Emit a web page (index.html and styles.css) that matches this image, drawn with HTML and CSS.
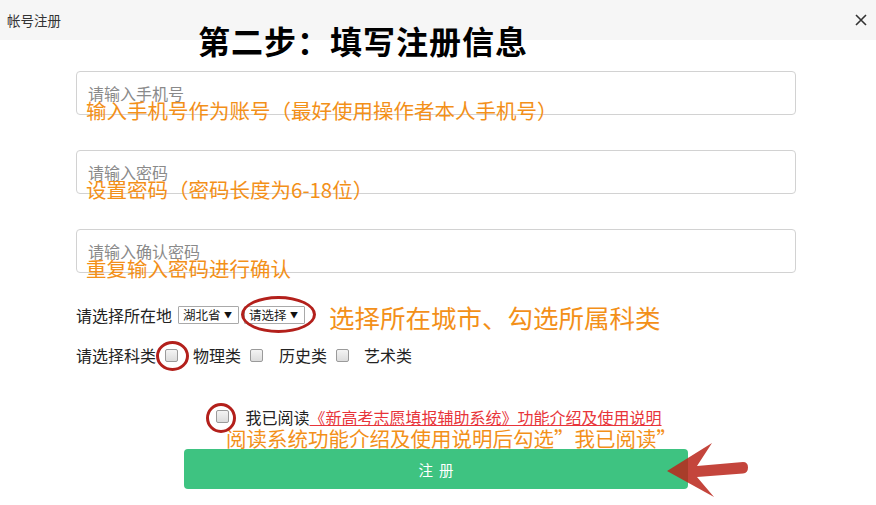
FILE: index.html
```html
<!DOCTYPE html>
<html lang="zh-CN">
<head>
<meta charset="utf-8">
<title>帐号注册</title>
<link rel="stylesheet" href="styles.css">
</head>
<body>
<div class="page">
  <header class="dialog-header">
    <span class="dialog-title">帐号注册</span>
    <svg class="close-icon" width="12" height="12" viewBox="0 0 12 12" aria-label="关闭">
      <path d="M1 1 L11 11 M11 1 L1 11" stroke="#333" stroke-width="1.6" fill="none"/>
    </svg>
  </header>

  <h1 class="step-title">第二步：填写注册信息</h1>

  <form class="form">
    <div class="field">
      <input class="text-input" type="text" placeholder="请输入手机号">
      <span class="note note-field">输入手机号作为账号（最好使用操作者本人手机号）</span>
    </div>
    <div class="field">
      <input class="text-input" type="password" placeholder="请输入密码">
      <span class="note note-field">设置密码（密码长度为6-18位）</span>
    </div>
    <div class="field">
      <input class="text-input" type="password" placeholder="请输入确认密码">
      <span class="note note-field">重复输入密码进行确认</span>
    </div>

    <div class="row row-city">
      <span class="label">请选择所在地</span>
      <span class="select select-province">湖北省<span class="caret">▼</span></span>
      <span class="marked">
        <span class="select select-city">请选择<span class="caret">▼</span></span>
        <span class="ring ring-select"></span>
      </span>
      <span class="note note-city">选择所在城市、勾选所属科类</span>
    </div>

    <div class="row row-subject">
      <span class="label">请选择科类</span>
      <span class="marked marked-first">
        <span class="checkbox"></span>
        <span class="ring ring-check"></span>
      </span>
      <span class="opt">物理类</span>
      <span class="checkbox"></span>
      <span class="opt opt-wide">历史类</span>
      <span class="checkbox"></span>
      <span class="opt opt-wide">艺术类</span>
    </div>

    <div class="row row-agree">
      <span class="marked">
        <span class="checkbox"></span>
        <span class="ring ring-agree"></span>
      </span>
      <span class="agree-text">我已阅读</span><a class="agree-link" href="#">《新高考志愿填报辅助系统》功能介绍及使用说明</a>
    </div>
    <div class="note note-agree">阅读系统功能介绍及使用说明后勾选”我已阅读”</div>

    <button class="submit" type="button">注 册</button>
  </form>

  <svg class="arrow" width="876" height="505" viewBox="0 0 876 505" aria-hidden="true">
    <path d="M667 471 L712 443 L697 466 L743 462 Q748 462 748 467.5 Q748 473 743 473.5 L697 477 L714 497 Z" fill="rgba(186,38,28,0.86)"/>
  </svg>
</div>
</body>
</html>
```

FILE: styles.css
```css
* { box-sizing: border-box; }

html, body {
  margin: 0;
  padding: 0;
  background: #fff;
}

body {
  font-family: "Noto Sans CJK SC", "Noto Sans", sans-serif;
  color: #222;
}

.page {
  position: relative;
  width: 876px;
  height: 505px;
  overflow: hidden;
}

.dialog-header {
  height: 40px;
  background: #f6f6f6;
  display: flex;
  align-items: center;
  justify-content: space-between;
  padding: 0 9px 0 7px;
}

.dialog-title {
  font-size: 13.5px;
  color: #333;
  line-height: 18px;
}

.close-icon { display: block; }

.step-title {
  position: absolute;
  left: 198px;
  top: 22px;
  margin: 0;
  font-size: 32px;
  line-height: 36px;
  font-weight: 700;
  letter-spacing: 1px;
  color: #000;
  white-space: nowrap;
}

.form {
  margin: 31px 80px 0 76px;
  display: flex;
  flex-direction: column;
}

.field {
  position: relative;
  height: 44px;
  margin-bottom: 35px;
}

.field:nth-of-type(3) { margin-bottom: 31px; }

.text-input {
  display: block;
  width: 100%;
  height: 44px;
  border: 1px solid #d2d2d2;
  border-radius: 4px;
  padding: 0 11px;
  font-family: inherit;
  font-size: 16px;
  color: #333;
  background: #fff;
  outline: none;
}

.text-input::placeholder { color: #8a8a8a; }

.note {
  color: #f39019;
  white-space: nowrap;
  font-family: "Noto Sans CJK SC", sans-serif;
}

.note-field {
  position: absolute;
  left: 10px;
  top: 27px;
  font-size: 20.5px;
  line-height: 24px;
}

.row {
  position: relative;
  display: flex;
  align-items: center;
  height: 22px;
  line-height: 20px;
  font-size: 16px;
}

.label { color: #222; white-space: nowrap; }

.select {
  display: inline-flex;
  align-items: center;
  height: 18px;
  border: 1px solid #a9a9a9;
  border-radius: 1px;
  padding: 0 6px 0 4px;
  font-size: 12.5px;
  line-height: 16px;
  color: #222;
  background: #fff;
  white-space: nowrap;
}

.select-province { margin-left: 6px; width: 61px; }
.select-city { width: 61px; }

.caret {
  font-size: 8px;
  margin-left: auto;
  color: #111;
}

.marked {
  position: relative;
  display: inline-flex;
  align-items: center;
}

.row-city .marked { margin-left: 5px; }

.ring {
  position: absolute;
  border: 3px solid #b3201b;
  border-radius: 50%;
  pointer-events: none;
}

.ring-select { left: -3px; top: -10px; width: 75px; height: 37px; }

.note-city {
  position: absolute;
  left: 253px;
  top: -2px;
  font-size: 25.5px;
  line-height: 30px;
}

.row-subject { margin-top: 18px; }

.checkbox {
  display: inline-block;
  width: 13px;
  height: 13px;
  border: 1px solid #9a9a9a;
  border-radius: 2px;
  background: linear-gradient(#f4f4f4, #dcdcdc);
  flex: none;
}

.marked-first { margin-left: 9px; }

.ring-check { left: -9px; top: -8px; width: 33px; height: 30px; }

.opt { margin: 0 9px 0 15px; }
.opt-wide { margin-left: 16px; }
.row-subject .opt:last-child { margin-left: 15px; }

.row-agree {
  margin-top: 40px;
  height: 21px;
  justify-content: center;
  padding-left: 6px;
}

.ring-agree { left: -10px; top: -7px; width: 30px; height: 30px; }

.agree-text { margin-left: 16px; color: #222; }

.agree-link {
  color: #e8343a;
  text-decoration: underline;
  white-space: nowrap;
}

.note-agree {
  margin-left: 150px;
  font-size: 20.5px;
  line-height: 22px;
  height: 22px;
}

.submit {
  align-self: center;
  width: 504px;
  height: 40px;
  border: none;
  border-radius: 4px;
  background: #3ec381;
  color: #fff;
  font-family: inherit;
  font-size: 14.5px;
  letter-spacing: 1.5px;
  padding: 0 0 0 1.5px;
}

.arrow {
  position: absolute;
  left: 0;
  top: 0;
  pointer-events: none;
}
```
